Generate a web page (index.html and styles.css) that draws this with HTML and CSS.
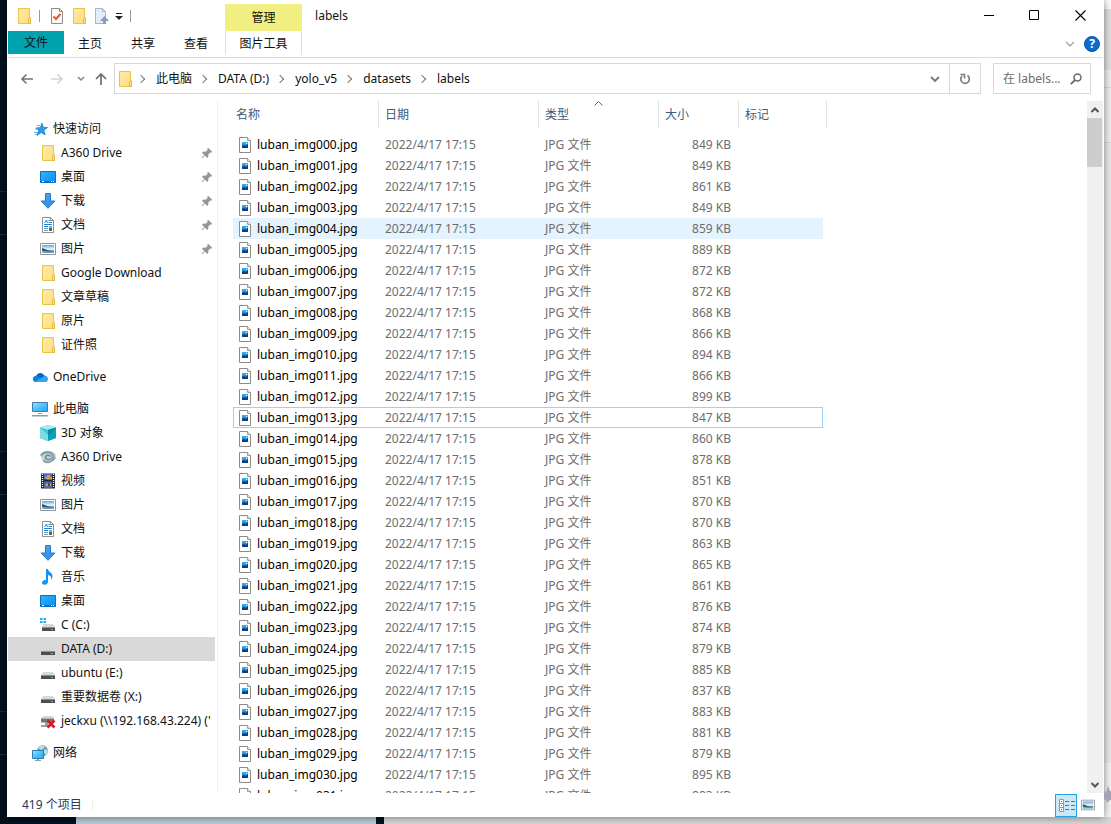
FILE: index.html
```html
<!DOCTYPE html>
<html lang="zh-CN">
<head>
<meta charset="utf-8">
<title>labels</title>
<link rel="stylesheet" href="styles.css">
</head>
<body>
<svg class="sprite" aria-hidden="true">
  <defs>
    <linearGradient id="g-folder" x1="0" y1="0" x2="1" y2="1"><stop offset="0" stop-color="#ffeaa6"/><stop offset="1" stop-color="#ffdd7c"/></linearGradient>
    <linearGradient id="g-screen" x1="0" y1="0" x2="1" y2="1"><stop offset="0" stop-color="#2fb4ff"/><stop offset="1" stop-color="#0a8ef0"/></linearGradient>
    <linearGradient id="g-pc" x1="0" y1="0" x2="1" y2="1"><stop offset="0" stop-color="#9adfff"/><stop offset=".5" stop-color="#4fc0fb"/><stop offset="1" stop-color="#2ba6ee"/></linearGradient>
    <linearGradient id="g-sky" x1="0" y1="0" x2="0" y2="1"><stop offset="0" stop-color="#6aa0ee"/><stop offset=".5" stop-color="#eaf6ff"/><stop offset=".7" stop-color="#b9d9ee"/><stop offset="1" stop-color="#5c95c4"/></linearGradient>
    <linearGradient id="g-thumb" x1="0" y1="0" x2="0" y2="1"><stop offset="0" stop-color="#35b8f5"/><stop offset="1" stop-color="#0b62bd"/></linearGradient>
    <linearGradient id="g-down" x1="0" y1="0" x2="0" y2="1"><stop offset="0" stop-color="#4ca5ee"/><stop offset="1" stop-color="#2f8ce4"/></linearGradient>
  </defs>
  <symbol id="folder" viewBox="0 0 16 16"><path d="M2.500 .5h11v9.500h1v5.500h-12z" fill="url(#g-folder)" stroke="#e9c44d"/><path d="M12.500 15.500v-4l.8-1.500h1.200v5.500z" fill="#ffe59a" stroke="#e3b93c"/></symbol>
  <symbol id="file" viewBox="0 0 16 16"><path d="M2.500 .5h8l3 3v12h-11z" fill="#fff" stroke="#8c8c8c"/><path d="M10.500 .5v3h3" fill="#eee" stroke="#9a9a9a"/><path d="M5 5h6v6H5z" fill="url(#g-thumb)"/><path d="M5 11V9l2-1 2 1 2-2v4z" fill="#123c7c"/><path d="M9 6h1v1H9z" fill="#fff"/></symbol>
  <symbol id="check-doc" viewBox="0 0 16 16"><path d="M2.500 .5h8l3 3v12h-11z" fill="#fafafa" stroke="#8c8c8c"/><path d="M10.500 .5v3h3" fill="none" stroke="#8c8c8c"/><path d="M4.500 8.500l2.500 2.500 4.500-5" fill="none" stroke="#e8582a" stroke-width="2"/></symbol>
  <symbol id="up-doc" viewBox="0 0 16 16"><path d="M2.500 .5h7l3 3v12h-10z" fill="#e4eefb" stroke="#a9b6cd"/><path d="M9.500 .5v3h3" fill="none" stroke="#a9b6cd"/><path d="M11.500 8l4.500 5h-3v3h-3v-3H7z" fill="#8b9bbb"/></symbol>
  <symbol id="star" viewBox="0 0 16 16"><path d="M10 2l1.200 4.300 4.300.2-3.600 2.700 1.300 4.800-4-2.500L5 14.500l1.600-5L4 7l4.300-.5z" fill="#2a9be8" stroke="#1777c2" stroke-width=".7"/><path d="M5 4.500h3M3 8h3M2 11.500h4M3 13.500h2" stroke="#55b2ee"/></symbol>
  <symbol id="desktop" viewBox="0 0 16 16"><path d="M.5 2.500h15v11H.5z" fill="url(#g-screen)" stroke="#0b71bd"/><path d="M1 12h14v1.500H1z" fill="#0870c0"/><path d="M2 12h2v1H2zM11 12h1v1h-1zM13 12h1v1h-1z" fill="#fff"/></symbol>
  <symbol id="down" viewBox="0 0 16 16"><path d="M5.500 .5h5V8h4.500L8 15.300 1 8h4.500z" fill="url(#g-down)" stroke="#2b79cb"/></symbol>
  <symbol id="document" viewBox="0 0 16 16"><path d="M2.500 .5h8l3 3v12h-11z" fill="#fff" stroke="#8a8f94"/><path d="M10.500 .5v3h3" fill="none" stroke="#8a8f94"/><path d="M4.500 6l2-3 1 3M8.500 3.500h1.500M8.500 5.500H12M4 7.500h8M4 9.500h4" fill="none" stroke="#2388d6"/><path d="M4 11.500h4M4 13.500h4" stroke="#8a9ba7"/><path d="M9 9h3v2H9z" fill="#5fb2ef"/><path d="M9 11h3v3H9z" fill="#456e62"/></symbol>
  <symbol id="picture" viewBox="0 0 16 16"><path d="M.5 2.500h15v11H.5z" fill="#fff" stroke="#959595"/><path d="M2 4h12v8H2z" fill="url(#g-sky)"/><path d="M2 7l3 1 3 1.300 6 .4v.8L8 10.800 2 10z" fill="#2f6450"/></symbol>
  <symbol id="cloud" viewBox="0 0 16 16"><path d="M4 7a4.400 4.400 0 0 1 8-.8A3.600 3.600 0 0 1 13 13H3.500A3.300 3.300 0 0 1 4 7z" fill="#0868c2"/><path d="M3.500 6.800c2 0 3 1 6 3L3 13A3.200 3.200 0 0 1 3.500 6.800z" fill="#1082d8"/><path d="M3 13l8.500-5.500c3-1.500 4.500.8 4.500 2.500 0 2-1.300 3-3 3z" fill="#30a6ee"/></symbol>
  <symbol id="pc" viewBox="0 0 16 16"><path d="M.5 1.500h15v9H.5z" fill="url(#g-pc)" stroke="#3f7ba2"/><path d="M6 12h4v1H6z" fill="#93a8b5"/><path d="M0 14h16v1.500H0z" fill="#8a9eac"/></symbol>
  <symbol id="cube" viewBox="0 0 16 16"><path d="M0 2.500L8 0l8 2.500V13l-8 3-8-3z" fill="#1fb7cc"/><path d="M0 2.500L8 0l8 2.500L8 5z" fill="#a8eef3"/><path d="M0 2.500L8 5v11l-8-3z" fill="#3bcbd8"/><path d="M0 2.500L8 10v6l-8-3z" fill="#7edde4"/><path d="M8 5l8-2.500V13l-8 3z" fill="#119fb7"/><path d="M8 5l8-2.500L8 11z" fill="#078da7"/></symbol>
  <symbol id="a360" viewBox="0 0 16 16"><path d="M0 6C2 1 11 0 15.500 5c.8 2 .5 4-.5 5.500L10 14c-3 1.300-6 .5-7-2z" fill="#c3d1da"/><path d="M1 6.500C4 2 11 2.500 13 6c1 2.500-1 4.500-3.500 4.300" fill="none" stroke="#8298a7" stroke-width="1.800"/><path d="M11 7.500C9 5.500 6 6 5.500 8c-.3 2 2 3 4 2.300" fill="none" stroke="#6f8696" stroke-width="1.500"/><path d="M3 11.500c4 3 10 1.500 12-3" fill="none" stroke="#879dab" stroke-width="1.600"/></symbol>
  <symbol id="video" viewBox="0 0 16 16"><path d="M1 .5h14v15H1z" fill="#28282c"/><path d="M4 1h8v6H4z" fill="#526fc5"/><path d="M4 8.500h8V15H4z" fill="#4668bd"/><path d="M5 4h2V2h3v2h2v2H8L6 7zM5 13l2-3 2 2 2-2v3z" fill="#d9a332"/><path d="M4 6h3v1H4zM8 10h2v3H8z" fill="#8b2b25"/><path d="M2.500 1v14M13.500 1v14" stroke="#fff" stroke-width="1.200" stroke-dasharray="1 1"/></symbol>
  <symbol id="music" viewBox="0 0 16 16"><path d="M6 0h2c.2 3.500 5 3.500 4.500 7.500-.2 1.500-.8 2.500-1.500 3.500.6-3-.4-4.500-3-5v6.500c0 2-1.500 3.300-3.500 3.300-1.600 0-2.500-.8-2.500-2 0-1.700 1.600-3 4-2.800z" fill="#1592ef"/></symbol>
  <symbol id="disk" viewBox="0 0 16 16"><path d="M3.500 7h9l2.500 3H1z" fill="#d5d7d9"/><path d="M1 10h14v4H1z" fill="#4b4f52"/><path d="M1 10h14v1H1z" fill="#8b8e90"/><path d="M11 12h2v1h-2z" fill="#41e052"/></symbol>
  <symbol id="disk-c" viewBox="0 0 16 16"><path d="M3.500 7h9l2.500 3H2z" fill="#d5d7d9"/><path d="M2 10h13v4H2z" fill="#4b4f52"/><path d="M2 10h13v1H2z" fill="#8b8e90"/><path d="M11 12h2v1h-2z" fill="#41e052"/><path d="M0 1h2.500v2H0zM3.500 1H6v2H3.500zM0 4h2.500v2H0zM3.500 4H6v2H3.500z" fill="#14b5ee"/></symbol>
  <symbol id="disk-x" viewBox="0 0 16 16"><path d="M3.500 3h9l2 2.500H1z" fill="#d5d7d9"/><path d="M1 5.500h13v4H1z" fill="#707477"/><path d="M1 12h8v2H1zM5 9h3v4H5z" fill="#9a9d9f"/><path d="M7.500 7.500l7 7m0-7l-7 7" stroke="#d31d25" stroke-width="2.800"/></symbol>
  <symbol id="network" viewBox="0 0 16 16"><circle cx="10.500" cy="5.800" r="5.500" fill="#679bb9"/><path d="M6 3c2-3 5-3 7-2l-2 3-2 1zM12 5l3-1 1 3-2 3-2-2z" fill="#b8dce3"/><path d="M.5 5.500h11v8H.5z" fill="url(#g-pc)" stroke="#2a7eae"/><path d="M5 14h2v1h2v1H3v-1h2z" fill="#8b9eac"/></symbol>
  <symbol id="pin" viewBox="0 0 12 12"><path d="M7.200 .8l4 4-1 1-1-.3-2 2 .2 2.300-1.200 1.200-2.400-2.400L1 11.500l-.5-.5 2.700-3L1 5.800l1.200-1.200 2.400.2 2-2-.4-1z" fill="#8e9aa3"/></symbol>
</svg>

<div class="desktop">
  <main class="window">
    <header class="ribbon">
      <div class="quick">
        <svg class="i16"><use href="#folder"/></svg>
        <span class="bar bar-first"></span>
        <button aria-label="属性"><svg class="i16"><use href="#check-doc"/></svg></button>
        <button aria-label="新建文件夹"><svg class="i16"><use href="#folder"/></svg></button>
        <button aria-label="移动"><svg class="i16"><use href="#up-doc"/></svg></button>
        <button aria-label="自定义"><svg class="i8" viewBox="0 0 8 8"><path d="M1 1h6v1H1zM0 4h8L4 8z" fill="#222"/></svg></button>
        <span class="bar"></span>
      </div>
      <div class="context-head">管理</div>
      <div class="title-area">
        <h1>labels</h1>
        <div class="controls">
          <button aria-label="最小化"><svg viewBox="0 0 12 12"><path d="M1 5.500h10" stroke="#000"/></svg></button>
          <button aria-label="最大化"><svg viewBox="0 0 12 12"><path d="M.5 .5h9v9h-9z" fill="none" stroke="#000"/></svg></button>
          <button aria-label="关闭"><svg viewBox="0 0 12 12"><path d="M.5 .5l10 10M10.500 .5l-10 10" stroke="#000" stroke-width="1.100"/></svg></button>
        </div>
      </div>
      <nav class="tabs">
        <button class="tab tab-file">文件</button>
        <button class="tab">主页</button>
        <button class="tab">共享</button>
        <button class="tab">查看</button>
      </nav>
      <button class="context-tab">图片工具</button>
      <div class="help-area">
        <button aria-label="展开功能区"><svg class="i8" viewBox="0 0 8 8"><path d="M0 2l4 4 4-4" fill="none" stroke="#999" stroke-width="1.200"/></svg></button>
        <button class="help" aria-label="帮助">?</button>
      </div>
    </header>

    <div class="address-row">
      <button class="go" aria-label="后退"><svg viewBox="0 0 14 14"><path d="M13 7H2M6.500 2.500L2 7l4.500 4.500" fill="none" stroke="#747474" stroke-width="1.600"/></svg></button>
      <button class="go" aria-label="前进"><svg viewBox="0 0 14 14"><path d="M1 7h11M7.500 2.500L12 7l-4.500 4.500" fill="none" stroke="#d3d3d3" stroke-width="1.600"/></svg></button>
      <button class="recent" aria-label="最近"><svg class="i8" viewBox="0 0 8 8"><path d="M1 2l3 3 3-3" fill="none" stroke="#858585" stroke-width="1.500"/></svg></button>
      <button class="up" aria-label="上移"><svg viewBox="0 0 14 14"><path d="M7 13V2M2 7l5-5 5 5" fill="none" stroke="#6e6e6e" stroke-width="1.700"/></svg></button>
      <div class="address">
        <svg class="i16"><use href="#folder"/></svg>
        <nav class="crumbs">
          <a href="#">此电脑</a><a href="#">DATA (D:)</a><a href="#">yolo_v5</a><a href="#">datasets</a><a href="#">labels</a>
        </nav>
        <button class="history" aria-label="历史"><svg viewBox="0 0 10 10"><path d="M1 3l4 4 4-4" fill="none" stroke="#777" stroke-width="1.800"/></svg></button>
        <button class="refresh" aria-label="刷新"><svg viewBox="0 0 12 12"><path d="M8.500 2.500A4.300 4.300 0 1 1 3 3" fill="none" stroke="#777" stroke-width="1.600"/><path d="M1.500 1.500h4v4" fill="none" stroke="#777" stroke-width="1.500"/></svg></button>
      </div>
      <label class="search">
        <input type="text" placeholder="在 labels..." aria-label="搜索 labels">
        <svg viewBox="0 0 12 12"><circle cx="7.500" cy="4.500" r="3.500" fill="none" stroke="#6b6b6b" stroke-width="1.500"/><path d="M5 7L.8 11.200" stroke="#6b6b6b" stroke-width="1.900"/></svg>
      </label>
    </div>

    <div class="content">
      <nav class="tree" id="tree"></nav>
      <section class="files">
        <table>
          <colgroup><col class="c-name"><col class="c-date"><col class="c-type"><col class="c-size"><col class="c-tag"><col class="c-edge"></colgroup>
          <thead><tr>
            <th class="first">名称</th><th>日期</th>
            <th class="sorted">类型<svg class="sort" viewBox="0 0 9 5"><path d="M.5 4.500l4-4 4 4" fill="none" stroke="#666"/></svg></th>
            <th>大小</th><th colspan="2">标记</th>
          </tr></thead>
          <tbody id="rows"></tbody>
        </table>
      </section>
      <div class="scroll">
        <button aria-label="向上滚动"><svg viewBox="0 0 10 10"><path d="M1.500 7L5 3.500 8.500 7" fill="none" stroke="#555" stroke-width="2"/></svg></button>
        <div class="thumb"></div>
        <button class="scroll-down" aria-label="向下滚动"><svg viewBox="0 0 10 10"><path d="M1.500 3L5 6.500 8.500 3" fill="none" stroke="#555" stroke-width="2"/></svg></button>
      </div>
    </div>

    <footer class="status">
      <span class="count">419 个项目</span>
      <button class="view view-on" aria-label="详细信息"><svg viewBox="0 0 17 15"><path d="M1.500 1.500h4v12h-4zM1.500 5.500h4M1.500 9.500h4" fill="#fff" stroke="#8f989d"/><path d="M3 3h1v1H3z" fill="#555"/><path d="M3 7h1v1H3z" fill="#1e88d8"/><path d="M3 11h1v1H3z" fill="#d02020"/><path d="M7 3.500h4M13 3.500h4M7 7.500h4M13 7.500h4M7 11.500h4M13 11.500h4" stroke="#6b7276"/></svg></button>
      <button class="view" aria-label="大缩略图"><svg class="i14" viewBox="0 0 16 16"><use href="#picture"/></svg></button>
    </footer>
  </main>
  <div class="taskbar"></div>
  <svg class="wall-icon" viewBox="0 0 10 18" aria-hidden="true"><path d="M0 4l2 3 2-7 2 5 4 2-2 4 2 4-4-1-3 3-1-4-2 1z" fill="#a3a3b5"/></svg>
</div>
<script src="app.js"></script>
</body>
</html>
```

FILE: styles.css
```css
* { box-sizing: border-box; }

body {
  margin: 0;
  font: 12px/16px "Noto Sans", "Noto Sans CJK SC", sans-serif;
  color: #111;
}

button {
  display: flex;
  align-items: center;
  justify-content: center;
  padding: 0;
  border: 0;
  background: none;
  font: inherit;
  color: inherit;
}

a { color: inherit; text-decoration: none; }

svg { display: block; flex: none; }

.sprite { position: absolute; width: 0; height: 0; }
.i16 { width: 16px; height: 16px; }
.i14 { width: 14px; height: 14px; }
.i8 { width: 8px; height: 8px; }

.desktop {
  position: relative;
  display: flex;
  flex-direction: column;
  height: 100vh;
  padding: 0 7px;
  overflow: hidden;
  background:
    repeating-linear-gradient(#01101e 0 191px, #12303f 191px 192px, #01101e 192px 234px, #12303f 234px 235px, #01101e 235px 260px) 0 0 / 7px 100% no-repeat,
    linear-gradient(#fff 9px, #e2e2e2 9px 70px, #f2f2f2 70px 87px, #dcdcdc 87px 88px, #f2f2f2 88px 142px, #dcdcdc 142px 143px, #ececec 143px 763px, #f6f6f6 763px);
}

.taskbar {
  flex: none;
  height: 7px;
  margin: 0 -7px;
  background: linear-gradient(90deg, #01101e 76px, #b7ccd6 76px 376px, #01101e 376px 384px, #d6d6d6 384px);
}

.wall-icon { position: absolute; right: -3px; bottom: 20px; width: 10px; height: 18px; }

.window {
  position: relative;
  display: flex;
  flex: 1;
  flex-direction: column;
  min-height: 0;
  padding: 0 1px;
  background: #fff;
  box-shadow: 0 0 8px rgba(0, 0, 0, .5);
}

/* Title bar and ribbon tabs */
.ribbon {
  display: grid;
  flex: none;
  grid-template: 31px 26px / auto 77px 1fr;
  border-bottom: 1px solid #dadbdc;
}

.quick { display: flex; align-items: center; gap: 6px; padding-left: 8px; }
.bar { width: 1px; height: 12px; margin-left: 1px; background: #999; }
.bar-first { margin-right: 3px; }

.context-head {
  display: flex;
  align-items: center;
  justify-content: center;
  margin-top: 4px;
  padding-top: 1px;
  background: #f1ef82;
}

.title-area { display: flex; align-items: flex-start; justify-content: space-between; }
.title-area h1 { margin: 8px 0 0 13px; font: inherit; }
.controls { display: flex; }
.controls button { width: 46px; height: 31px; }
.controls button:last-child { width: 45px; }
.controls svg { width: 12px; height: 12px; }

.tabs { display: flex; gap: 1px; padding-right: 3px; }
.tab { height: 24px; padding: 1px 14px 0; }
.tab-file { margin-right: -1px; height: 23px; padding: 1px 16px 0; background: #00a2ad; }

.context-tab {
  height: 24px;
  padding-top: 1px;
  border: solid #ddd;
  border-width: 0 1px;
}

.help-area { display: flex; align-items: center; justify-content: flex-end; gap: 10px; padding-right: 3px; }
.help {
  width: 16px;
  height: 16px;
  border: 1px solid #0a54a0;
  border-radius: 50%;
  background: #0a6cce;
  color: #fff;
  font-weight: 700;
}

/* Address bar */
.address-row { display: flex; flex: none; align-items: center; height: 43px; padding: 0 12px 2px 4px; }
.address-row > button { height: 30px; }
.go { width: 30px; }
.go svg, .up svg { width: 14px; height: 14px; }
.recent { width: 18px; }
.up { width: 22px; }

.address {
  display: flex;
  flex: 1;
  align-items: center;
  height: 31px;
  margin-left: 2px;
  padding-left: 2px;
  border: 1px solid #d9d9d9;
}
.crumbs { display: flex; flex: 1; margin-left: -3px; }
.crumbs a { display: flex; align-items: center; }
.crumbs a::before {
  width: 5px;
  height: 5px;
  margin: 0 12px 0 8px;
  border: solid #777;
  border-width: 1px 1px 0 0;
  content: "";
  transform: rotate(45deg);
}
.history { width: 28px; height: 29px; }
.history svg { width: 10px; height: 10px; }
.refresh { width: 31px; height: 29px; border-left: 1px solid #d9d9d9; }
.refresh svg { width: 12px; height: 12px; }

.search {
  display: flex;
  align-items: center;
  width: 98px;
  height: 31px;
  margin-left: 12px;
  padding: 0 8px 0 9px;
  border: 1px solid #d9d9d9;
}
.search input { flex: 1; min-width: 0; padding: 0; border: 0; outline: 0; font: inherit; }
.search input::placeholder { color: #6d6d6d; opacity: 1; }
.search svg { width: 12px; height: 12px; }

/* Main area */
.content { display: flex; flex: 1; min-height: 0; }

.tree {
  flex: none;
  width: 210px;
  padding: 16px 2px 0 0;
  border-right: 1px solid #f0f0f0;
  overflow: hidden;
}
.group { margin: 0 0 8px; padding: 0; list-style: none; }
.node {
  display: flex;
  align-items: center;
  gap: 5px;
  height: 24px;
  padding-left: 32px;
  overflow: hidden;
  white-space: nowrap;
}
.node-top { padding-left: 24px; }
.node-on { background: #d9d9d9; }
.pin { width: 12px; height: 12px; margin: 0 2px 0 auto; }

.files { flex: 1; min-width: 0; padding-left: 15px; overflow: hidden; }
.files table { width: 594px; table-layout: fixed; border-spacing: 0; white-space: nowrap; }
.c-name { width: 146px; }
.c-date { width: 160px; }
.c-type { width: 120px; }
.c-size { width: 80px; }
.c-tag { width: 84px; }
.c-edge { width: 4px; }

th {
  height: 27px;
  padding: 0 0 0 6px;
  border-right: 1px solid #e2e2e2;
  color: #43597c;
  font-weight: 400;
  text-align: left;
}
th.first { padding-left: 3px; }
.sorted { position: relative; }
.sort { position: absolute; top: 0; left: 55px; width: 9px; height: 5px; }

tbody::before { display: block; height: 6px; content: ""; }
td { height: 21px; padding: 0 0 0 6px; color: #6d6d6d; }
td:first-child { padding-left: 4px; }
td:nth-child(4) { padding-right: 8px; text-align: right; }
.name { display: flex; align-items: center; gap: 4px; color: #000; }
.hover td { background: #e5f3ff; }
.focus td { border: solid #99d1ff; border-width: 1px 0; }
.focus td:first-child { border-left-width: 1px; padding-left: 3px; }
.focus td:last-child { border-right-width: 1px; }

.scroll { display: flex; flex: none; flex-direction: column; width: 16px; background: #f0f0f0; }
.scroll button { height: 17px; }
.scroll svg { width: 10px; height: 10px; }
.thumb { width: 15px; height: 49px; background: #cdcdcd; }
.scroll .scroll-down { margin-top: auto; }

/* Status bar */
.status { display: flex; flex: none; align-items: center; height: 24px; padding-right: 4px; }
.count { margin: 0 auto 0 14px; padding-right: 10px; border-right: 1px solid #eee; color: #26395c; line-height: 12px; }
.view { width: 22px; height: 23px; }
.view-on { border: 1px solid #26a0da; background: #cbe8f6; }
.view-on svg { width: 17px; height: 15px; }
```

FILE: app.js
```js
const svg = (id, cls) => `<svg class="${cls}"><use href="#${id}"/></svg>`;

// Each group: heading first, then children as [icon, label, state].
const groups = [
  [
    ['star', '快速访问'],
    ['folder', 'A360 Drive', 'pin'],
    ['desktop', '桌面', 'pin'],
    ['down', '下载', 'pin'],
    ['document', '文档', 'pin'],
    ['picture', '图片', 'pin'],
    ['folder', 'Google Download'],
    ['folder', '文章草稿'],
    ['folder', '原片'],
    ['folder', '证件照'],
  ],
  [['cloud', 'OneDrive']],
  [
    ['pc', '此电脑'],
    ['cube', '3D 对象'],
    ['a360', 'A360 Drive'],
    ['video', '视频'],
    ['picture', '图片'],
    ['document', '文档'],
    ['down', '下载'],
    ['music', '音乐'],
    ['desktop', '桌面'],
    ['disk-c', 'C (C:)'],
    ['disk', 'DATA (D:)', 'on'],
    ['disk', 'ubuntu (E:)'],
    ['disk', '重要数据卷 (X:)'],
    ['disk-x', "jeckxu (\\\\192.168.43.224) ('"],
  ],
  [['network', '网络']],
];

document.getElementById('tree').innerHTML = groups.map(group =>
  '<ul class="group">' + group.map(([icon, label, state], i) => {
    const cls = 'node' + (i === 0 ? ' node-top' : '') + (state === 'on' ? ' node-on' : '');
    return `<li><a class="${cls}" href="#">${svg(icon, 'i16')}<span>${label}</span>${state === 'pin' ? svg('pin', 'pin') : ''}</a></li>`;
  }).join('') + '</ul>').join('');

const sizes = [
  849, 849, 861, 849, 859, 889, 872, 872, 868, 866, 894, 866, 899, 847, 860, 878,
  851, 870, 870, 863, 865, 861, 876, 874, 879, 885, 837, 883, 881, 879, 895, 883,
];
const rowState = { 4: 'hover', 13: 'focus' };

document.getElementById('rows').innerHTML = sizes.map((size, i) =>
  `<tr class="${rowState[i] || ''}"><td><span class="name">${svg('file', 'i16')}luban_img${String(i).padStart(3, '0')}.jpg</span></td>` +
  `<td>2022/4/17 17:15</td><td>JPG 文件</td><td>${size} KB</td><td></td></tr>`).join('');
```
